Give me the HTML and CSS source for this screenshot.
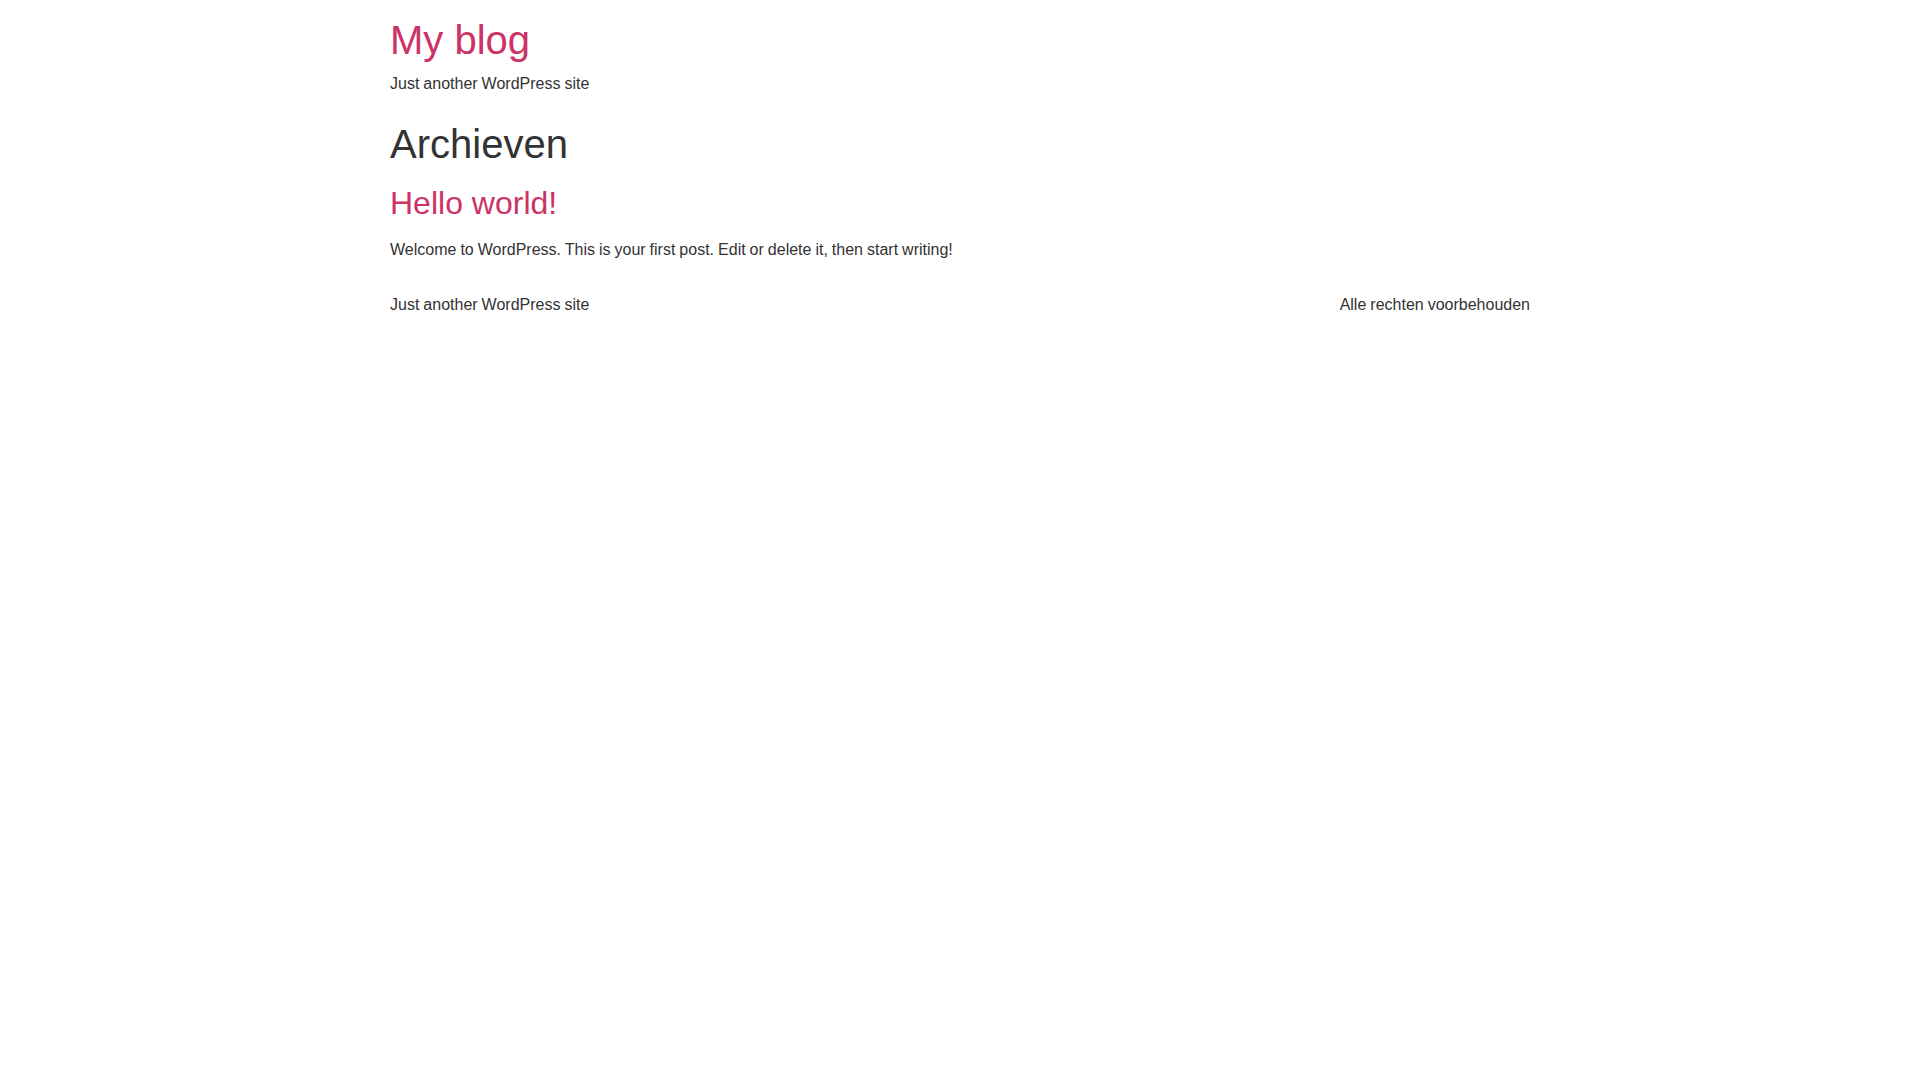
FILE: index.html
```html
<!DOCTYPE html>
<html lang="nl">
<head>
<meta charset="utf-8">
<title>Archieven - My blog</title>
<link rel="stylesheet" href="styles.css">
</head>
<body>
<header class="site-header">
  <h1 class="site-title"><a href="#">My blog</a></h1>
  <p class="site-description">Just another WordPress site</p>
</header>
<main class="site-main">
  <div class="page-header">
    <h1 class="entry-title">Archieven</h1>
  </div>
  <div class="page-content">
    <article class="post">
      <h2 class="post-title"><a href="#">Hello world!</a></h2>
      <p>Welcome to WordPress. This is your first post. Edit or delete it, then start writing!</p>
    </article>
  </div>
</main>
<footer class="site-footer">
  <p class="footer-description">Just another WordPress site</p>
  <p class="copyright">Alle rechten voorbehouden</p>
</footer>
</body>
</html>
```

FILE: styles.css
```css
html, body {
  margin: 0;
  padding: 0;
  background: #fff;
}
body {
  font-family: "Liberation Sans", Arial, sans-serif;
  font-size: 16px;
  line-height: 1.5;
  color: #333;
}
a {
  color: #c36;
  text-decoration: none;
}
h1, h2 {
  font-weight: 500;
  line-height: 1.2;
  margin: 8px 0 16px;
}
h1 { font-size: 40px; }
h2 { font-size: 32px; }
p {
  margin: 0 0 14.4px;
  word-spacing: -0.45px;
}

.site-header,
.site-main,
.site-footer {
  max-width: 1140px;
  margin: 0 auto;
}
.site-header {
  padding: 8px 0 16px;
}
.site-header .site-title {
  margin: 8px 0 8px;
}
.site-header .site-description {
  margin: 0;
}
.site-main .entry-title {
  margin-top: 8px;
}
.site-footer {
  display: flex;
  justify-content: space-between;
  padding: 16px 0;
}
.site-footer p {
  margin: 0;
}
```
